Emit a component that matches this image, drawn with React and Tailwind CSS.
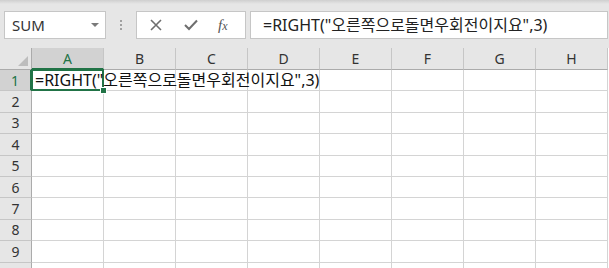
import React from "react";

const COLS = ["A", "B", "C", "D", "E", "F", "G", "H"];
const ROWS = [1, 2, 3, 4, 5, 6, 7, 8, 9, 10];
const FONT = { fontFamily: '"Noto Sans", "Noto Sans CJK KR", sans-serif' };
const FORMULA = '=RIGHT("오른쪽으로돌면우회전이지요",3)';

export default function App() {
  return (
    <div
      className="w-[609px] h-[268px] overflow-hidden bg-white relative"
      style={FONT}
    >
      {/* Formula bar area */}
      <div className="h-[48px] bg-[#e6e6e6] flex flex-col">
        <div className="h-[4px] bg-gradient-to-b from-[#cfcfcf] to-[#e6e6e6]" />
        <div className="mt-[7px] h-[28px] flex items-stretch">
          {/* Name box */}
          <div className="ml-[4px] w-[102px] bg-white border border-[#c6c6c6] flex items-center justify-between">
            <span className="pl-[7px] text-[15px] text-[#333] leading-none">SUM</span>
            <span className="mr-[6px] w-0 h-0 border-l-[4px] border-r-[4px] border-t-[4px] border-l-transparent border-r-transparent border-t-[#7a7a7a]" />
          </div>
          {/* Dots */}
          <div className="w-[30px] flex flex-col items-center justify-center gap-[2px]">
            <span className="w-[2px] h-[2px] bg-[#a0a0a0]" />
            <span className="w-[2px] h-[2px] bg-[#a0a0a0]" />
            <span className="w-[2px] h-[2px] bg-[#a0a0a0]" />
          </div>
          {/* Icon box */}
          <div className="w-[110px] bg-white border border-[#c6c6c6] flex items-center">
            <svg className="ml-[13px]" width="12" height="12" viewBox="0 0 12 12">
              <path d="M1 1 L11 11 M11 1 L1 11" stroke="#6e6e6e" strokeWidth="1.6" fill="none" />
            </svg>
            <svg className="ml-[22px]" width="14" height="12" viewBox="0 0 14 12">
              <path d="M1 6 L5 10 L13 1.5" stroke="#6e6e6e" strokeWidth="2" fill="none" />
            </svg>
            <span
              className="ml-[20px] text-[15px] italic text-[#555] leading-none"
              style={{ fontFamily: '"Liberation Serif", serif' }}
            >
              f<span className="text-[12px]">x</span>
            </span>
          </div>
          {/* Formula input */}
          <div className="ml-[4px] w-[358px] bg-white border border-[#c6c6c6] flex items-center">
            <span className="pl-[12px] text-[16px] text-[#222] whitespace-nowrap leading-none">
              {FORMULA}
            </span>
          </div>
        </div>
      </div>

      {/* Column header row */}
      <div className="flex h-[22px]">
        <div className="w-[32px] h-full bg-[#e6e6e6] border-r border-b border-[#ababab] relative">
          <div
            className="absolute right-[3px] bottom-[3px] w-0 h-0"
            style={{ borderBottom: "10px solid #bdbdbd", borderLeft: "10px solid transparent" }}
          />
        </div>
        {COLS.map((c) => (
          <div
            key={c}
            className={
              c === "A"
                ? "w-[72px] h-full bg-[#d2d2d2] border-r border-[#c6c6c6] border-b-2 border-b-[#217346] flex items-center justify-center text-[14px] text-[#217346]"
                : "w-[72px] h-full bg-[#e6e6e6] border-r border-[#c6c6c6] border-b border-b-[#ababab] flex items-center justify-center text-[14px] text-[#333]"
            }
          >
            {c}
          </div>
        ))}
      </div>

      {/* Rows */}
      {ROWS.map((r) => (
        <div key={r} className="flex h-[21.4px]">
          <div
            className={
              r === 1
                ? "w-[32px] h-full bg-[#d2d2d2] border-r-2 border-r-[#217346] border-b border-b-[#c6c6c6] flex items-center justify-center text-[14px] text-[#217346]"
                : "w-[32px] h-full bg-[#e6e6e6] border-r border-r-[#ababab] border-b border-b-[#c6c6c6] flex items-center justify-center text-[14px] text-[#333]"
            }
          >
            {r < 10 ? r : ""}
          </div>
          {COLS.map((c) => (
            <div
              key={c}
              className="w-[72px] h-full border-r border-b border-[#d4d4d4] relative"
            >
              {r === 1 && c === "A" && (
                <>
                  <div className="absolute left-[-1px] top-[-1px] right-[-1px] bottom-[-1px] border-2 border-[#217346] z-10" />
                  <div className="absolute left-[3px] top-0 bottom-0 flex items-center z-20">
                    <span className="text-[16px] text-[#111] whitespace-nowrap leading-none bg-transparent">
                      {FORMULA}
                    </span>
                  </div>
                  <div className="absolute right-[-4px] bottom-[-4px] w-[7px] h-[7px] bg-[#217346] border border-white z-30" />
                </>
              )}
            </div>
          ))}
        </div>
      ))}
    </div>
  );
}
